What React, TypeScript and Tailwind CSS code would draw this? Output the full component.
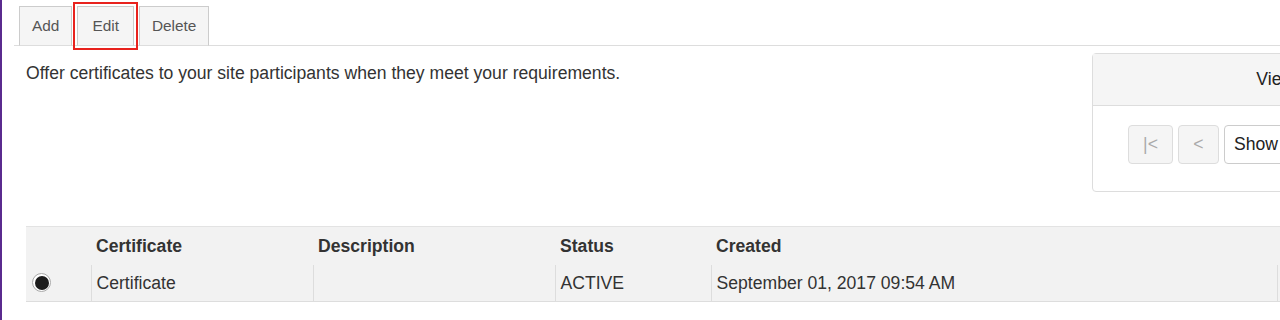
import React from 'react';

const tabs = ['Add', 'Edit', 'Delete'];

const columns = [
  { label: '', w: 'w-[65px]' },
  { label: 'Certificate', w: 'w-[222px]' },
  { label: 'Description', w: 'w-[242px]' },
  { label: 'Status', w: 'w-[156px]' },
  { label: 'Created', w: 'w-[566px]' },
  { label: '', w: 'w-[120px]' },
];

function Radio() {
  return (
    <span className="flex h-[19px] w-[19px] items-center justify-center rounded-full border border-[#a9a9a9] bg-white">
      <span className="h-[14px] w-[14px] rounded-full bg-[#1c1c1c]" />
    </span>
  );
}

export default function App() {
  return (
    <div
      className="h-[320px] w-[1280px] overflow-hidden border-l-2 border-[#5a2a8e] bg-white text-[#333]"
      style={{ fontFamily: '"Liberation Sans", Arial, sans-serif' }}
    >
      {/* tabs */}
      <div className="ml-[12px] flex gap-[5px] border-b border-[#ddd] pl-[5px] pt-[6px]">
        {tabs.map((t) => (
          <button
            key={t}
            className={`-mb-px h-[40px] border border-[#ccc] border-b-[#ddd] bg-[#f5f5f5] text-[15.4px] text-[#555] ${
              t === 'Edit' ? 'px-[14px] outline-2 outline-offset-2 outline-[#e8221d]' : 'px-[12px]'
            }`}
          >
            {t}
          </button>
        ))}
      </div>

      <div className="flex">
        <p className="ml-[24px] mt-[16px] w-[1066px] shrink-0 text-[17.6px] leading-[22px]">
          Offer certificates to your site participants when they meet your requirements.
        </p>

        {/* options panel */}
        <div className="mt-[7px] h-[139px] w-[432px] shrink-0 rounded-[4px] border border-[#ddd] bg-white">
          <div className="flex h-[52px] items-center justify-center border-b border-[#ddd] bg-[#f5f5f5] text-[17.6px] text-[#222]">
            View Options
          </div>
          <div className="flex gap-[5px] pl-[35px] pt-[19px]">
            <button className="h-[39px] w-[45px] rounded-[4px] border border-[#ddd] bg-[#f5f5f5] text-[17.6px] text-[#aaa]">
              |&lt;
            </button>
            <button className="h-[39px] w-[41px] rounded-[4px] border border-[#ddd] bg-[#f5f5f5] text-[17.6px] text-[#aaa]">
              &lt;
            </button>
            <div className="flex h-[39px] w-[120px] items-center rounded-[4px] border border-[#ccc] bg-white px-[9px] text-[17.6px] text-[#222]">
              Show 10
            </div>
          </div>
        </div>
      </div>

      {/* table */}
      <table className="ml-[24px] mt-[34px] w-[1371px] table-fixed border-collapse text-[17.6px]">
        <thead>
          <tr className="h-[38px] border-t border-[#e3e3e3] bg-[#f2f2f2]">
            {columns.map((c, i) => (
              <th key={i} className={`${c.w} px-[5px] pt-[1px] text-left font-bold text-[#333]`}>
                {c.label}
              </th>
            ))}
          </tr>
        </thead>
        <tbody>
          <tr className="h-[37px] border-b border-[#ddd] bg-[#f2f2f2]">
            <td className="pl-[6px]">
              <Radio />
            </td>
            <td className="border-l border-[#ddd] px-[5px]">Certificate</td>
            <td className="border-l border-[#ddd] px-[5px]"></td>
            <td className="border-l border-[#ddd] px-[5px]">ACTIVE</td>
            <td className="border-l border-[#ddd] px-[5px]">September 01, 2017 09:54 AM</td>
            <td className="border-l border-[#ddd] px-[5px]"></td>
          </tr>
        </tbody>
      </table>
    </div>
  );
}
